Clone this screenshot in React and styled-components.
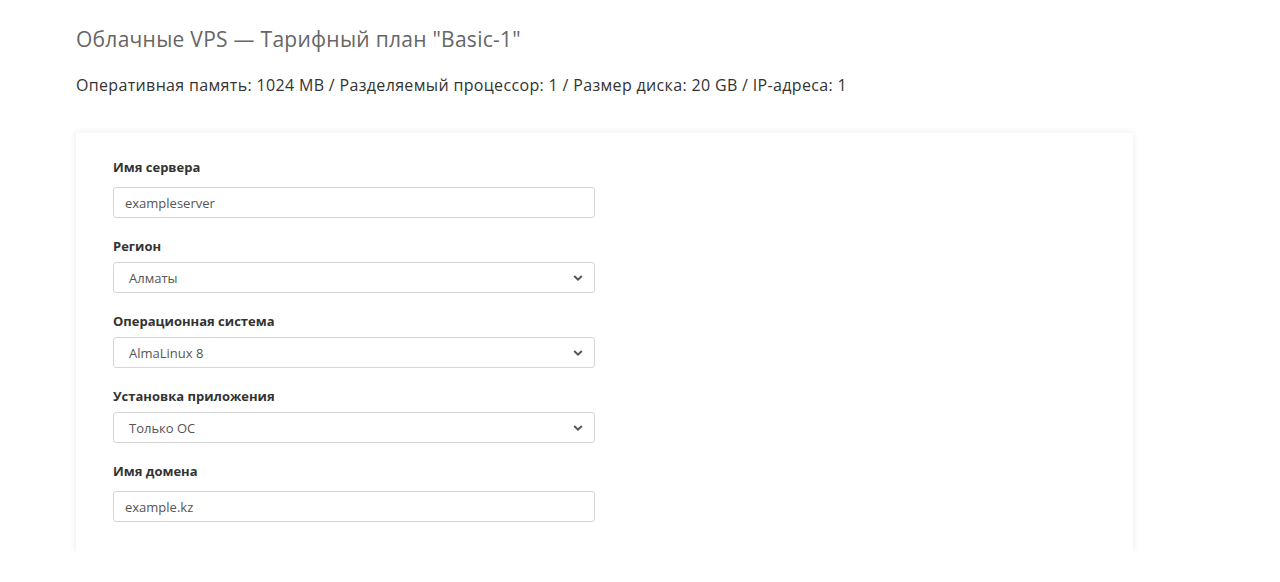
import React from 'react';
import styled, { createGlobalStyle } from 'styled-components';

const GlobalStyle = createGlobalStyle`
  body {
    margin: 0;
    background: #fff;
    font-family: "Open Sans", "Liberation Sans", sans-serif;
  }
`;

const Page = styled.main`
  padding: 27px 0 0 76px;
`;

const Title = styled.h1`
  margin: 0;
  font-size: 21px;
  line-height: 24px;
  font-weight: 400;
  letter-spacing: 0.27px;
  color: #666;
`;

const Specs = styled.p`
  margin: 24px 0 0;
  font-size: 16px;
  line-height: 20px;
  letter-spacing: 0.34px;
  color: #333;
`;

const Card = styled.section`
  width: 1057px;
  box-sizing: border-box;
  margin-top: 38px;
  padding: 25px 37px 30px;
  background: #fff;
  box-shadow: 0 0 7px rgba(0, 0, 0, 0.09);
  display: flex;
  flex-direction: column;
  gap: 19px;
`;

const Field = styled.div`
  display: flex;
  flex-direction: column;
  width: 482px;
`;

const Label = styled.label`
  font-size: 13px;
  line-height: 18px;
  font-weight: 700;
  color: #333;
  margin-bottom: ${(p) => (p.$text ? '11px' : '7px')};
`;

const Box = styled.div`
  position: relative;
  height: 31px;
  box-sizing: border-box;
  border: 1px solid #d6d6d6;
  border-radius: 3px;
  display: flex;
  align-items: center;
  padding-left: ${(p) => (p.$select ? '15px' : '11px')};
  font-size: 13px;
  color: #555;
`;

const Chevron = styled.svg`
  position: absolute;
  right: 11px;
  top: 50%;
  transform: translateY(-50%);
`;

const fields = [
  { label: 'Имя сервера', value: 'exampleserver' },
  { label: 'Регион', value: 'Алматы', select: true },
  { label: 'Операционная система', value: 'AlmaLinux 8', select: true },
  { label: 'Установка приложения', value: 'Только ОС', select: true },
  { label: 'Имя домена', value: 'example.kz' },
];

export default function App() {
  return (
    <>
      <GlobalStyle />
      <Page>
        <Title>Облачные VPS — Тарифный план "Basic-1"</Title>
        <Specs>Оперативная память: 1024 MB / Разделяемый процессор: 1 / Размер диска: 20 GB / IP-адреса: 1</Specs>
        <Card>
          {fields.map((f) => (
            <Field key={f.label}>
              <Label $text={!f.select}>{f.label}</Label>
              <Box $select={f.select}>
                {f.value}
                {f.select && (
                  <Chevron width="10" height="7" viewBox="0 0 10 7">
                    <polyline points="1.2,1.5 5,5.2 8.8,1.5" fill="none" stroke="#555" strokeWidth="2" />
                  </Chevron>
                )}
              </Box>
            </Field>
          ))}
        </Card>
      </Page>
    </>
  );
}
